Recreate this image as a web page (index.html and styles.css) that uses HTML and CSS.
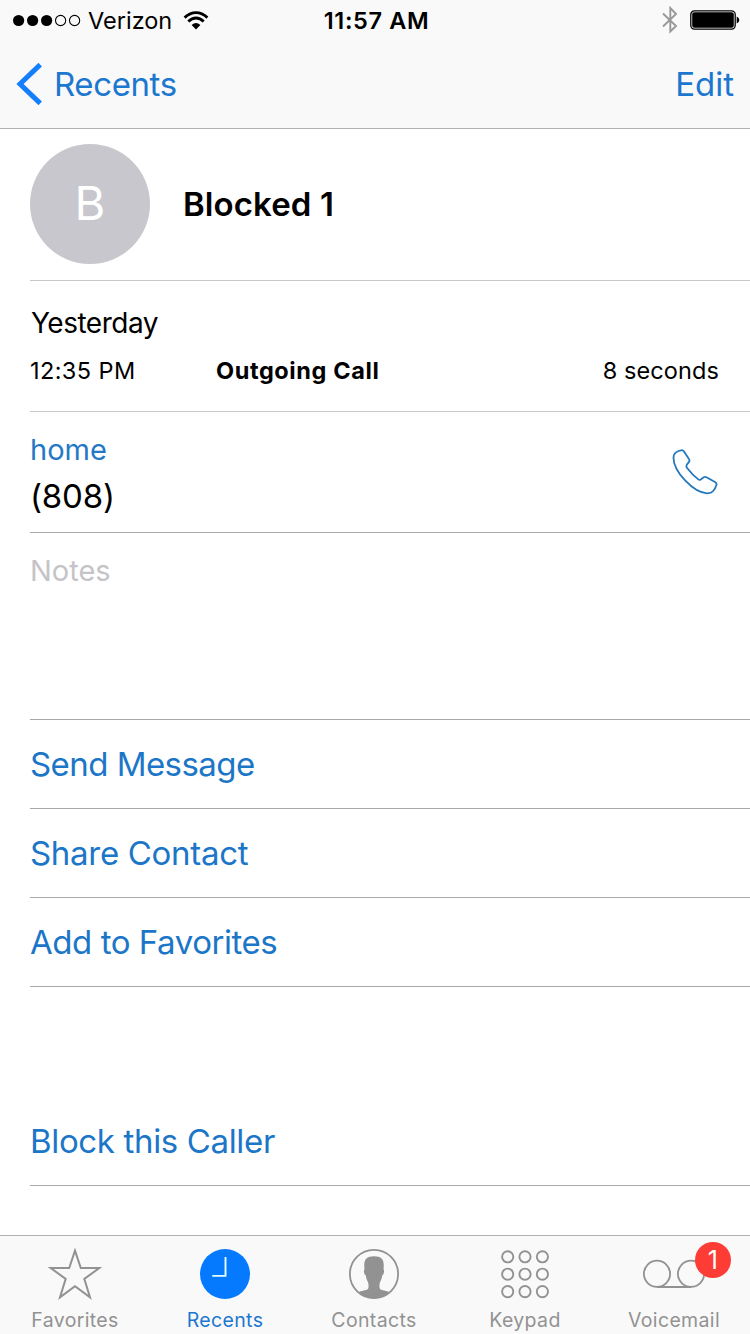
FILE: index.html
```html
<!DOCTYPE html>
<html lang="en">
<head>
<meta charset="utf-8">
<title>Blocked 1</title>
<link rel="stylesheet" href="styles.css">
</head>
<body>
<div class="screen">
  <header class="top">
    <div class="status">
      <div class="status-left">
        <svg class="signal" width="68" height="14" viewBox="0 0 68 14"><g fill="#000"><circle cx="5.6" cy="7.5" r="5.6"/><circle cx="19.6" cy="7.5" r="5.6"/><circle cx="33.6" cy="7.5" r="5.6"/></g><g fill="none" stroke="#000" stroke-width="1.1"><circle cx="47.6" cy="7.5" r="5.1"/><circle cx="61.6" cy="7.5" r="5.1"/></g></svg>
        <span class="carrier">Verizon</span>
        <svg class="wifi" width="26" height="19" viewBox="0 0 26 19"><g fill="none" stroke="#000" stroke-width="2.8"><path d="M1.6 6.6Q7 1.7 13 1.7T24.4 6.6"/><path d="M5.3 10.6Q9 7 13 7T20.7 10.6"/></g><path d="M8.6 14Q13 10.2 17.4 14L13 18.4Z"/></svg>
      </div>
      <span class="clock">11:57 AM</span>
      <div class="status-right">
        <svg width="16" height="28" viewBox="0 0 16 28"><path d="M1 7.5L14 20L8.3 25.5V2L14 8L1 20.5" fill="none" stroke="#98989a" stroke-width="1.9"/></svg>
        <svg width="50" height="20" viewBox="0 0 50 20"><rect x=".8" y=".9" width="44.4" height="18.2" rx="3.5" fill="none" stroke="#000" stroke-width="1.3"/><rect x="2.2" y="2.3" width="41.6" height="15.4" rx="2"/><path d="M46.7 6.5Q49.3 7.5 49.3 10T46.7 13.5Z"/></svg>
      </div>
    </div>
    <nav class="nav">
      <a class="back"><svg width="28" height="42" viewBox="0 0 28 42"><path d="M25.2 1.6L5 21L25.2 40.4" fill="none" stroke="#157efb" stroke-width="5"/></svg><span class="back-text">Recents</span></a>
      <a class="edit">Edit</a>
    </nav>
  </header>
  <main class="content">
    <section class="row person"><div class="avatar">B</div><h1 class="name">Blocked 1</h1></section>
    <section class="row history">
      <div class="day">Yesterday</div>
      <div class="call"><span class="time">12:35 PM</span><span class="kind">Outgoing Call</span><span class="length">8 seconds</span></div>
    </section>
    <section class="row phone dark">
      <div><div class="label">home</div><div class="number">(808)</div></div>
      <svg width="46" height="46" viewBox="0 0 46 46"><path d="M6.6 2L9.2 1.3Q10.9 .9 11.8 2.3L16.8 9.8Q18 11.4 17 12.9L14.8 15.8Q13.9 17.4 15.1 19Q20 25.5 26.3 30.4Q27.3 31.3 28.7 30.4L31.8 28.3Q33 27.5 34.5 28.2L43 33Q45 34.2 44.5 35.8Q43.4 39.5 41.2 42Q39.2 44.4 35 44.3C22 44 1.4 23 1.5 8.6Q1.6 3.6 6.6 2Z" fill="none" stroke="#2478bd" stroke-width="1.8"/></svg>
    </section>
    <section class="row notes dark">Notes</section>
    <a class="row action send dark">Send Message</a>
    <a class="row action share dark">Share Contact</a>
    <a class="row action add dark">Add to Favorites</a>
    <a class="row action block dark">Block this Caller</a>
  </main>
  <footer class="tabs">
    <a class="tab favorites"><svg width="54" height="54" viewBox="0 0 54 54"><path d="M27 3.6L32.8 21.1H51.2L36.3 31.9L42 50.3L27 39.2L12 50.3L17.7 31.9L2.8 21.1H21.2Z" fill="none" stroke="#929292" stroke-width="2" stroke-miterlimit="10"/></svg><span>Favorites</span></a>
    <a class="tab recents"><svg width="54" height="54" viewBox="0 0 54 54"><circle cx="27" cy="27" r="25" fill="#067aff"/><path d="M27.5 10V28.9H14.3" fill="none" stroke="#e6ffff" stroke-width="1.9"/></svg><span>Recents</span></a>
    <a class="tab contacts"><svg width="54" height="54" viewBox="0 0 54 54"><circle cx="27" cy="27" r="24.1" fill="none" stroke="#929292" stroke-width="1.8"/><path d="M12 45C16 43 21 43.6 21.4 41Q21.8 37 21 35.2Q19.2 32 18.7 28.2Q17 27.5 16.9 23.4Q17 22.4 17.5 22.4C16.5 13 18.5 9.2 27 9.2S37.5 13 36.5 22.4Q37.2 22.4 37.1 23.4Q37 27.5 35.3 28.2Q34.8 32 33 35.2Q32.2 37 32.6 41C33 43.6 38 43 42 45Q36 51.5 27 51.5T12 45Z" fill="#929292"/></svg><span>Contacts</span></a>
    <a class="tab keypad"><svg width="54" height="54" viewBox="0 0 54 54"><g fill="none" stroke="#929292" stroke-width="1.9"><circle cx="9.7" cy="9.8" r="5.6"/><circle cx="27" cy="9.8" r="5.6"/><circle cx="44.4" cy="9.8" r="5.6"/><circle cx="9.7" cy="27.2" r="5.6"/><circle cx="27" cy="27.2" r="5.6"/><circle cx="44.4" cy="27.2" r="5.6"/><circle cx="9.7" cy="44.6" r="5.6"/><circle cx="27" cy="44.6" r="5.6"/><circle cx="44.4" cy="44.6" r="5.6"/></g></svg><span>Keypad</span></a>
    <a class="tab voicemail"><svg width="64" height="54" viewBox="0 0 64 54"><g fill="none" stroke="#929292" stroke-width="1.8"><circle cx="15" cy="26.8" r="13.1"/><circle cx="49" cy="26.8" r="13.1"/><path d="M15 40H49"/></g></svg><span>Voicemail</span><b class="badge">1</b></a>
  </footer>
</div>
</body>
</html>
```
FILE: styles.css
```css
* { box-sizing: border-box; }
body { margin: 0; background: #fff; color: #000; font-family: Inter, "Liberation Sans", sans-serif; }
svg { display: block; flex: none; }
.screen { width: 750px; height: 1334px; display: flex; flex-direction: column; overflow: hidden; white-space: nowrap; }
.top { height: 129px; background: #f9f9f9; border-bottom: 1px solid #b2b2b2; }
.status { height: 40px; display: grid; grid-template-columns: 1fr auto 1fr; align-items: center; padding: 0 10px 0 13px; }
.status-left, .status-right { display: flex; align-items: center; }
.status-left { gap: 7px; }
.status-right { justify-content: flex-end; gap: 12px; }
.carrier { font-size: 23.5px; }
.wifi { margin-left: 4px; }
.clock { font-size: 23.5px; font-weight: 600; letter-spacing: .65px; }
.nav { height: 88px; display: flex; align-items: center; justify-content: space-between; padding: 0 16px 0 15px; font-size: 33px; color: #1c77cf; }
.back { display: flex; align-items: center; gap: 11px; }
.back-text { letter-spacing: -.4px; }
.content { flex: 1; padding-left: 30px; }
.row { border-bottom: 1px solid #c8c7cc; }
.dark { border-color: #a9a9ab; }
.person { height: 152px; display: flex; align-items: center; gap: 33px; padding-bottom: 2px; }
.avatar { width: 120px; height: 120px; border-radius: 50%; background: #c8c7ce; color: #fff; font-size: 47px; line-height: 118px; text-align: center; }
.name { margin: 0; font-size: 33px; font-weight: 600; letter-spacing: .1px; }
.history { height: 131px; padding-top: 22px; }
.day { height: 40px; line-height: 40px; font-size: 28px; letter-spacing: -.5px; padding-left: 1px; }
.call { display: grid; grid-template-columns: 186px 1fr auto; height: 40px; line-height: 40px; margin-top: 8px; padding-right: 31px; font-size: 23.5px; }
.time { letter-spacing: .4px; }
.kind { font-weight: 700; letter-spacing: .6px; }
.length { letter-spacing: .1px; }
.phone { height: 121px; padding: 18px 32px 0 0; display: flex; justify-content: space-between; }
.phone svg { margin-top: 19px; }
.label { height: 40px; line-height: 40px; font-size: 29px; color: #2478c5; }
.number { height: 48px; line-height: 48px; margin-top: 2px; font-size: 33px; letter-spacing: -.2px; }
.notes { height: 187px; padding-top: 18px; line-height: 40px; font-size: 29px; color: #c4c4c8; }
.action { display: block; height: 89px; line-height: 88px; font-size: 33px; color: #1c76c8; }
.send { letter-spacing: -.55px; }
.share { letter-spacing: -.3px; }
.add { letter-spacing: -.45px; }
.block { height: 199px; padding-top: 110px; letter-spacing: -.35px; }
.tabs { height: 99px; display: grid; grid-template-columns: repeat(5, 1fr); background: #f9f9f9; border-top: 1px solid #b2b2b2; }
.tab { position: relative; display: flex; flex-direction: column; align-items: center; padding-top: 11px; font-size: 19.5px; line-height: 24px; letter-spacing: .35px; color: #929292; }
.tab span { margin-top: 7px; }
.recents { color: #1c77cf; }
.contacts, .voicemail { padding-right: 2px; }
.badge { position: absolute; left: 95px; top: 6px; width: 36px; height: 36px; border-radius: 50%; background: #fd3d35; color: #fff; font-size: 25px; font-weight: 400; line-height: 36px; text-align: center; }
```
